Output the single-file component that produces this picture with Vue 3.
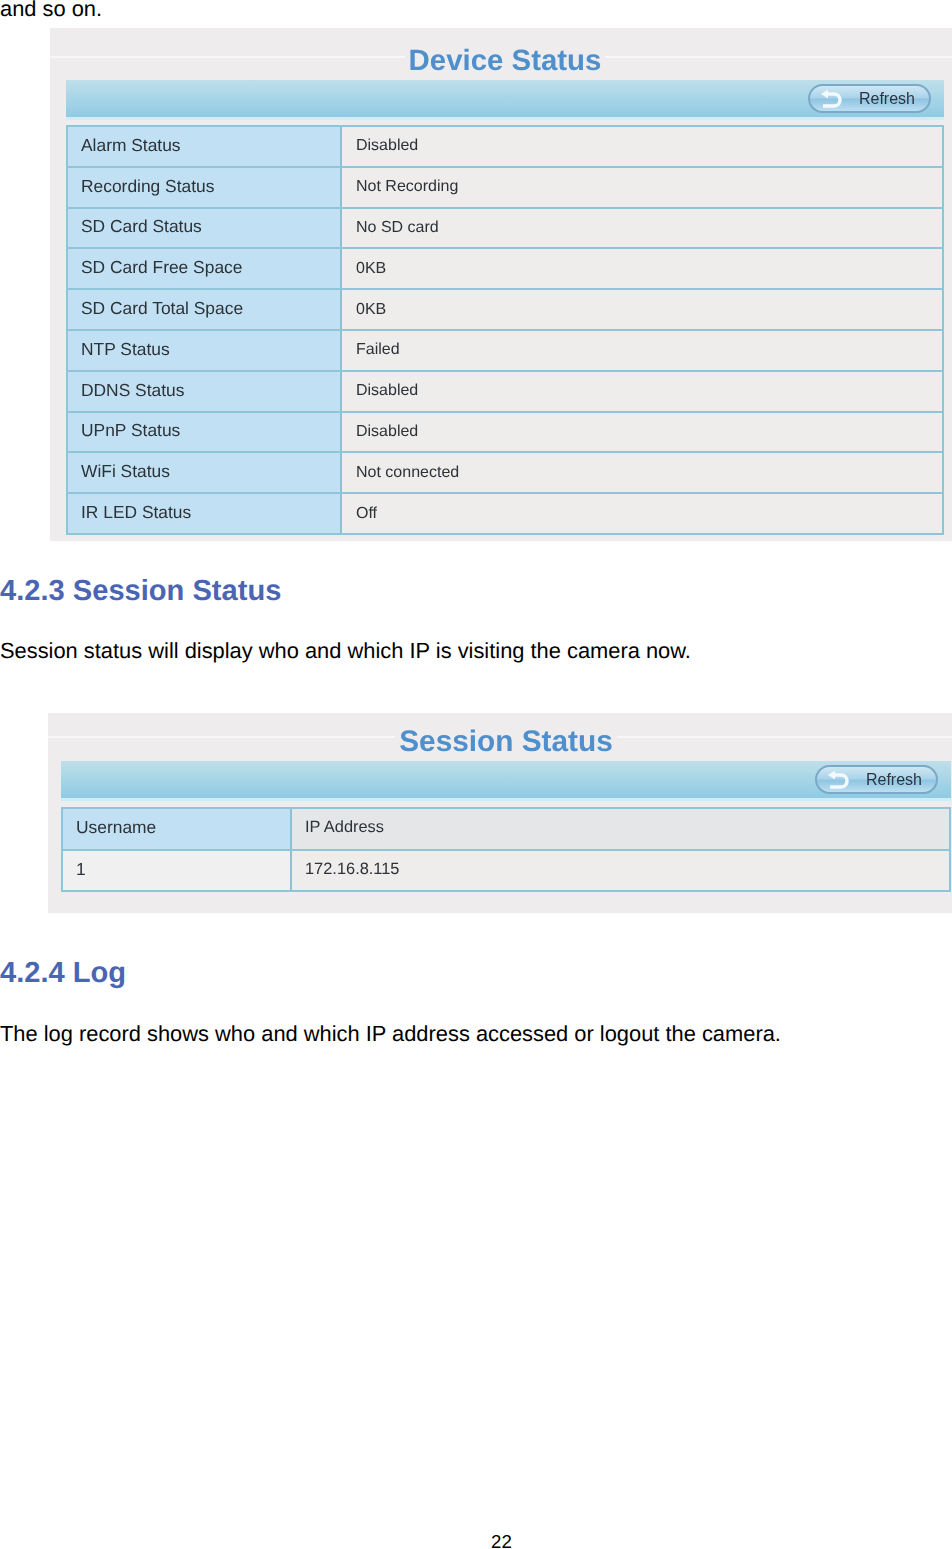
<template>
  <div class="page">
    <p class="line first">and so on.</p>

    <section class="panel device">
      <h2 class="panel-title"><span>Device Status</span></h2>
      <div class="bar">
        <button class="refresh">
          <svg width="32" height="20" viewBox="0 0 32 20">
            <path d="M12 5 L21 5 C29 5 29 17 21 17 L10 17" fill="none" stroke="#f4f9fc" stroke-width="3.5" />
            <path d="M15 0.5 L8 5 L15 9.5 Z" fill="#f4f9fc" />
          </svg>
          <span>Refresh</span>
        </button>
      </div>
      <div class="table">
        <div v-for="row in deviceRows" :key="row[0]" class="row">
          <div class="cell key">{{ row[0] }}</div>
          <div class="cell val">{{ row[1] }}</div>
        </div>
      </div>
    </section>

    <h1 class="heading h-session">4.2.3 Session Status</h1>
    <p class="line p-session">Session status will display who and which IP is visiting the camera now.</p>

    <section class="panel session">
      <h2 class="panel-title"><span>Session Status</span></h2>
      <div class="bar">
        <button class="refresh">
          <svg width="32" height="20" viewBox="0 0 32 20">
            <path d="M12 5 L21 5 C29 5 29 17 21 17 L10 17" fill="none" stroke="#f4f9fc" stroke-width="3.5" />
            <path d="M15 0.5 L8 5 L15 9.5 Z" fill="#f4f9fc" />
          </svg>
          <span>Refresh</span>
        </button>
      </div>
      <div class="table">
        <div class="row head">
          <div class="cell key">Username</div>
          <div class="cell val">IP Address</div>
        </div>
        <div class="row">
          <div class="cell plain">1</div>
          <div class="cell val">172.16.8.115</div>
        </div>
      </div>
    </section>

    <h1 class="heading h-log">4.2.4 Log</h1>
    <p class="line p-log">The log record shows who and which IP address accessed or logout the camera.</p>

    <div class="pagenum">22</div>
  </div>
</template>

<script setup>
const deviceRows = [
  ["Alarm Status", "Disabled"],
  ["Recording Status", "Not Recording"],
  ["SD Card Status", "No SD card"],
  ["SD Card Free Space", "0KB"],
  ["SD Card Total Space", "0KB"],
  ["NTP Status", "Failed"],
  ["DDNS Status", "Disabled"],
  ["UPnP Status", "Disabled"],
  ["WiFi Status", "Not connected"],
  ["IR LED Status", "Off"],
];
</script>

<style>
html, body {
  background: #fff;
}
</style>

<style scoped>
.page {
  width: 952px;
  height: 1549px;
  overflow: hidden;
  display: flex;
  flex-direction: column;
  font-family: "Liberation Sans", Arial, sans-serif;
  color: #000;
  text-rendering: geometricPrecision;
}

.line {
  margin: 0;
  font-size: 21.87px;
  line-height: 24px;
}

.first {
  line-height: 18px;
}

.panel {
  background: #eeecec;
  box-sizing: border-box;
  color: #2c3238;
  filter: blur(0.35px);
}

.device {
  margin: 10px 0 0 50px;
  width: 902px;
  height: 513px;
  padding: 0 8px 0 16px;
}

.session {
  margin: 50px 0 0 48px;
  width: 904px;
  height: 200px;
  padding: 0 1px 0 13px;
}

.panel-title {
  margin: 0;
  box-sizing: border-box;
  display: flex;
  align-items: center;
  justify-content: center;
  font-weight: bold;
  color: #4f8fcb;
  background-image: linear-gradient(#f8f7f7, #f8f7f7);
  background-repeat: no-repeat;
  background-size: 100% 2px;
}

.device .panel-title {
  height: 52px;
  padding-top: 14px;
  margin: 0 -8px 0 -16px;
  font-size: 29.4px;
  background-position: 0 28px;
}

.session .panel-title {
  height: 48px;
  padding-top: 10px;
  margin: 0 -1px 0 -13px;
  font-size: 29.8px;
  background-position: 0 23px;
}

.panel-title span {
  background: #eeecec;
  padding: 0 4px;
}

.device .panel-title span {
  transform: translateX(4px);
}

.session .panel-title span {
  transform: translateX(6px);
}

.bar {
  height: 37px;
  display: flex;
  align-items: center;
  justify-content: flex-end;
  background: linear-gradient(#bfdfea, #8fcbe4);
  border-bottom: 3px solid #d3ebf4;
}

.device .bar {
  margin-bottom: 5px;
  padding-right: 13px;
}

.session .bar {
  margin-bottom: 6px;
  padding-right: 13px;
}

.refresh {
  width: 123px;
  height: 29px;
  padding: 0 14px 0 3px;
  display: flex;
  align-items: center;
  justify-content: space-between;
  box-sizing: border-box;
  border: 2px solid #7ba9c7;
  border-radius: 15px;
  background: linear-gradient(#cfe7f3 0%, #a9d3ea 48%, #8ec4e2 52%, #bcdff0 100%);
  font-family: inherit;
  font-size: 16px;
  color: #2c3440;
}

.table {
  border: 2px solid #8fc5d9;
}

.row {
  display: grid;
  height: 40.8px;
  box-sizing: border-box;
  border-bottom: 2px solid #8fc5d9;
}

.row:last-child {
  border-bottom: none;
  height: 38.8px;
}

.device .row {
  grid-template-columns: 274px 1fr;
}

.session .row {
  grid-template-columns: 229px 1fr;
  height: 42px;
}

.session .row:last-child {
  height: 39px;
}

.cell {
  display: flex;
  align-items: center;
  font-size: 17.4px;
  padding-left: 13px;
}

.key {
  background: #c1e0f3;
  border-right: 2px solid #8fc0d2;
}

.device .key {
  padding-bottom: 2px;
}

.session .cell {
  padding-bottom: 3px;
}

.val {
  background: #eeedec;
  font-size: 16px;
  padding-left: 14px;
}

.session .val {
  font-size: 16.4px;
  padding-left: 13px;
}

.plain {
  background: #f0f0f0;
  border-right: 2px solid #8fc0d2;
}

.head .val {
  background: #e4e6e8;
}

.heading {
  margin: 0;
  font-size: 29.1px;
  line-height: 34px;
  font-weight: bold;
  color: #4a66b2;
}

.h-session {
  margin-top: 33px;
}

.p-session {
  margin-top: 31px;
}

.h-log {
  margin-top: 43px;
}

.p-log {
  margin-top: 32px;
}

.pagenum {
  margin-top: auto;
  padding-left: 491px;
  font-size: 18.7px;
  line-height: 16px;
  height: 15px;
}
</style>
